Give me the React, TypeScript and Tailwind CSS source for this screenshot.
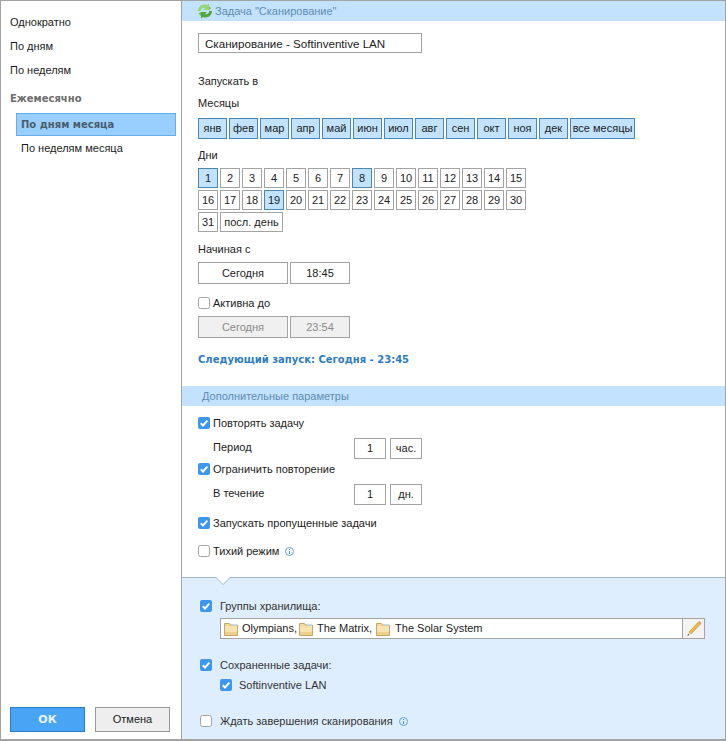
import React from "react";

const months = ["янв","фев","мар","апр","май","июн","июл","авг","сен","окт","ноя","дек"];
const selectedDays = [1, 8, 19];

function Box({ on, className = "", children }: { on?: boolean; className?: string; children: React.ReactNode }) {
  return (
    <div className={`flex items-center justify-center whitespace-nowrap border ${on ? "border-[#4a87b5] bg-[#c2e2fd]" : "border-[#a3a3a3] bg-white"} ${className}`}>
      {children}
    </div>
  );
}

function Check({ on }: { on?: boolean }) {
  return on ? (
    <svg width="12" height="12" viewBox="0 0 12 12" className="shrink-0">
      <rect width="12" height="12" rx="2" fill="#3d97ee" />
      <path d="M2.8 6.2 5 8.6 9.3 3.6" fill="none" stroke="#fff" strokeWidth="2" />
    </svg>
  ) : (
    <svg width="12" height="12" viewBox="0 0 12 12" className="shrink-0">
      <rect x=".5" y=".5" width="11" height="11" rx="2" fill="#fff" stroke="#a3a3a3" />
    </svg>
  );
}

function Info() {
  return (
    <svg width="9" height="9" viewBox="0 0 9 9" className="shrink-0">
      <circle cx="4.5" cy="4.5" r="4" fill="none" stroke="#5aa5e2" />
      <path d="M4.5 2v1M4.5 4v3" stroke="#4a95d5" />
    </svg>
  );
}

function Folder({ className = "" }: { className?: string }) {
  return (
    <svg width="14" height="14" viewBox="0 0 14 14" className={`shrink-0 ${className}`}>
      <path d="M.5 3V1.500h5l1 1.500h7v10.500H.5z" fill="#eed9a0" stroke="#c4a868" />
      <path d="M1 4h12v9H1z" fill="#f6e3b0" />
      <path d="M1 10h12v3H1z" fill="#ecd08c" />
      <rect x="8" y="2" width="5" height="1.400" fill="#bfe0f5" />
    </svg>
  );
}

function Pencil() {
  return (
    <svg width="16" height="17" viewBox="0 0 16 17">
      <path d="M3 12 12.500 2l2 2L5 14z" fill="#f0b94e" stroke="#b9862c" strokeWidth=".6" />
      <path d="M12.500 2l1-1 2 2-1 1z" fill="#ee8f5a" />
      <path d="M3 12l2 2-3.600 1.800z" fill="#e8d3a8" />
      <path d="M1.400 15.800 2.200 14l.9.900z" fill="#222" />
    </svg>
  );
}

function Refresh() {
  return (
    <svg width="16" height="16" viewBox="0 0 16 16" className="shrink-0">
      <path d="M1 8C1 3.500 5.500.2 10 2l2-1.500V7H6l2-2C5.800 4 4 5.500 3.800 8z" fill="#9ad47a" />
      <path d="M15 8c0 4.500-4.500 7.800-9 6l-2 1.500V9h6l-2 2c2.200 1 4-.5 4.200-3z" fill="#4fa83a" />
      <path d="M1.500 10.500 4 9v4z" fill="#6fbe52" />
      <path d="M14 5.500 12 7V3z" fill="#6fbe52" />
    </svg>
  );
}

function Row({ h, className = "", children }: { h: string; className?: string; children: React.ReactNode }) {
  return <div className={`flex items-center ${h} ${className}`}>{children}</div>;
}

export default function App() {
  return (
    <div className="flex h-[741px] w-[726px] border-l border-t border-[#a3a3a3] bg-white font-['Liberation_Sans',sans-serif] text-[11px] leading-none text-[#1c1c1c]">
      {/* Left column */}
      <div className="flex w-[180px] shrink-0 flex-col border-b-2 border-[#a3a3a3] pt-[9px]">
        <div className="flex h-6 items-center pl-[9px]">Однократно</div>
        <div className="flex h-6 items-center pl-[9px]">По дням</div>
        <div className="flex h-6 items-center pl-[9px]">По неделям</div>
        <div className="mt-[5px] flex h-6 items-center pl-[9px] font-['DejaVu_Sans',sans-serif] text-[10px] font-bold text-[#6d6d6d]">Ежемесячно</div>
        <div className="mx-[15px] mt-[2px] flex h-[23px] w-[160px] items-center border border-[#62aef0] bg-[#99cfff] pl-[4px] font-['DejaVu_Sans',sans-serif] text-[10px] font-bold text-[#4c5c6c]">По дням месяца</div>
        <div className="flex h-6 items-center pl-[20px]">По неделям месяца</div>
        <div className="mt-auto mb-[7px] flex gap-[10px] pl-[9px]">
          <div className="flex h-[25px] w-[75px] items-center justify-center border border-[#2a7cc4] bg-[#4aa4f5] font-['DejaVu_Sans',sans-serif] text-[11px] font-bold text-[#e8f4ff]">ОК</div>
          <div className="flex h-[25px] w-[75px] items-center justify-center border border-[#999] bg-[#eeeeee]">Отмена</div>
        </div>
      </div>

      {/* Right column */}
      <div className="flex min-w-0 flex-1 flex-col border-x border-[#a3a3a3]">
        <div className="flex h-[20px] shrink-0 items-center gap-[2px] bg-[#c2e2fd] pl-[15px] text-[#5f8cb3]">
          <Refresh />
          <span>Задача "Сканирование"</span>
        </div>

        <div className="flex flex-col pl-[16px]">
          <input readOnly value="Сканирование - Softinventive LAN" className="mt-[12px] h-[20px] w-[224px] border border-[#a3a3a3] pl-[6px] text-[11.6px] outline-none" />
          <Row h="h-[22px]" className="mt-[17px]">Запускать в</Row>
          <Row h="h-[22px]">Месяцы</Row>
          <div className="mt-[4px] flex gap-[2px]">
            {months.map((m) => (
              <Box key={m} on className="h-[21px] w-[29px]">{m}</Box>
            ))}
            <Box on className="h-[21px] w-[65px]">все месяцы</Box>
          </div>
          <Row h="h-[20px]" className="mt-[6px]">Дни</Row>
          <div className="mt-[3px] flex w-[340px] flex-wrap gap-[2px]">
            {Array.from({ length: 31 }, (_, i) => i + 1).map((d) => (
              <Box key={d} on={selectedDays.includes(d)} className="h-[20px] w-[20px]">{d}</Box>
            ))}
            <Box className="h-[20px] w-[63px]">посл. день</Box>
          </div>
          <Row h="h-[20px]" className="mt-[7px]">Начиная с</Row>
          <div className="mt-[3px] flex gap-[2px]">
            <Box className="h-[22px] w-[90px]">Сегодня</Box>
            <Box className="h-[22px] w-[60px]">18:45</Box>
          </div>
          <Row h="h-[20px]" className="mt-[9px] gap-[3px]"><Check />Активна до</Row>
          <div className="mt-[3px] flex gap-[2px] text-[#8a8a8a]">
            <div className="flex h-[22px] w-[90px] items-center justify-center border border-[#a3a3a3] bg-[#f0f0f0]">Сегодня</div>
            <div className="flex h-[22px] w-[60px] items-center justify-center border border-[#a3a3a3] bg-[#f0f0f0]">23:54</div>
          </div>
          <Row h="h-[20px]" className="mt-[12px] font-['DejaVu_Sans',sans-serif] text-[10px] font-bold text-[#2f7bc0]">Следующий запуск: Сегодня - 23:45</Row>
        </div>

        <div className="mt-[16px] flex h-[20px] shrink-0 items-center bg-[#c2e2fd] pl-[20px] text-[#5f8cb3]">Дополнительные параметры</div>

        <div className="flex flex-col pl-[16px] pt-[7px]">
          <Row h="h-[20px]" className="gap-[3px]"><Check on />Повторять задачу</Row>
          <Row h="h-[21px]" className="mt-[5px] pl-[15px]">
            <span className="-mt-[2px] w-[141px]">Период</span>
            <Box className="h-[21px] w-[32px]">1</Box>
            <Box className="ml-[4px] h-[21px] w-[32px]">час.</Box>
          </Row>
          <Row h="h-[20px]" className="gap-[3px]"><Check on />Ограничить повторение</Row>
          <Row h="h-[21px]" className="mt-[5px] pl-[15px]">
            <span className="-mt-[2px] w-[141px]">В течение</span>
            <Box className="h-[21px] w-[32px]">1</Box>
            <Box className="ml-[4px] h-[21px] w-[32px]">дн.</Box>
          </Row>
          <Row h="h-[20px]" className="mt-[8px] gap-[3px]"><Check on />Запускать пропущенные задачи</Row>
          <Row h="h-[20px]" className="mt-[8px] gap-[3px]"><Check />Тихий режим<span className="ml-[3px]"><Info /></span></Row>
        </div>

        <div className="relative mt-[16px] flex min-h-0 flex-1 flex-col border-y border-t-[#9fb6c9] border-b-[#a3a3a3] border-b-2 bg-[#dfeefe] pl-[18px] pt-[18px] text-[#333]">
          <div className="absolute -top-px left-[33px] h-0 w-0 border-x-[8px] border-t-[8px] border-x-transparent border-t-[#9fb6c9]" />
          <div className="absolute -top-px left-[34px] h-0 w-0 border-x-[7px] border-t-[7px] border-x-transparent border-t-white" />
          <Row h="h-[20px]" className="gap-[8px]"><Check on />Группы хранилища:</Row>
          <div className="ml-[20px] mt-[2px] flex h-[21px] w-[485px] items-stretch border border-[#a3a3a3] bg-white text-[#1c1c1c]">
            <div className="flex flex-1 items-center gap-[4px] pl-[3px]">
              <Folder /><span>Olympians,</span><Folder className="-ml-[2px]" /><span>The Matrix,</span><Folder /><span className="ml-[1px]">The Solar System</span>
            </div>
            <div className="flex w-[22px] items-center justify-center border-l border-[#a3a3a3] bg-[#f3f3f3]"><Pencil /></div>
          </div>
          <Row h="h-[20px]" className="mt-[16px] gap-[8px]"><Check on />Сохраненные задачи:</Row>
          <Row h="h-[20px]" className="ml-[20px] gap-[7px]"><Check on />Softinventive LAN</Row>
          <Row h="h-[20px]" className="mt-[16px] gap-[8px]"><Check />Ждать завершения сканирования<span className="ml-[-2px]"><Info /></span></Row>
        </div>
      </div>
    </div>
  );
}
